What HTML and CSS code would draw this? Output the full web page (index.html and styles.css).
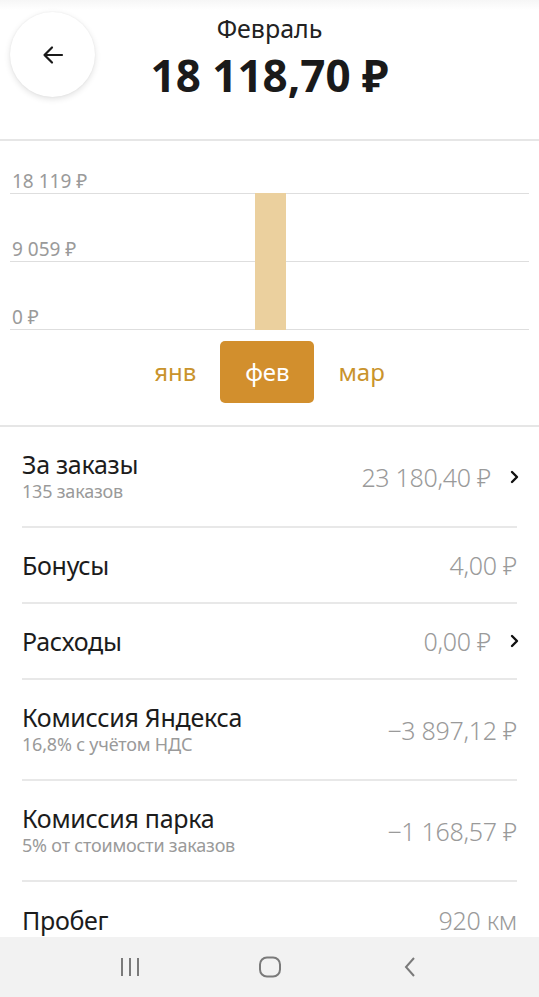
FILE: index.html
```html
<!DOCTYPE html>
<html lang="ru">
<head>
<meta charset="utf-8">
<link rel="stylesheet" href="styles.css">
</head>
<body>
<div class="screen">
  <header class="header">
    <button class="back">
      <svg width="24" height="24" viewBox="0 0 24 24"><path d="M21 12H3.5M11 4.5L3.5 12L11 19.5" fill="none" stroke="#1a1a1a" stroke-width="2.2" stroke-linecap="round" stroke-linejoin="round"/></svg>
    </button>
    <div class="title">
      <div class="month">Февраль</div>
      <div class="total">18 118,70 ₽</div>
    </div>
  </header>

  <section class="chart">
    <div class="plot">
      <div class="grid-row"><span class="axis">18 119 ₽</span></div>
      <div class="grid-row"><span class="axis">9 059 ₽</span></div>
      <div class="grid-row"><span class="axis">0 ₽</span></div>
      <div class="bar"></div>
    </div>
    <div class="months">
      <span class="m">янв</span>
      <span class="m active">фев</span>
      <span class="m">мар</span>
    </div>
  </section>

  <ul class="list">
    <li class="row">
      <div class="label"><div class="name">За заказы</div><div class="sub">135 заказов</div></div>
      <div class="value">23 180,40 ₽</div>
      <svg class="chev" width="12" height="14" viewBox="0 0 12 14"><path d="M3 2l5 5-5 5" fill="none" stroke="#111" stroke-width="2.4" stroke-linecap="round" stroke-linejoin="round"/></svg>
    </li>
    <li class="row">
      <div class="label"><div class="name">Бонусы</div></div>
      <div class="value">4,00 ₽</div>
    </li>
    <li class="row">
      <div class="label"><div class="name">Расходы</div></div>
      <div class="value">0,00 ₽</div>
      <svg class="chev" width="12" height="14" viewBox="0 0 12 14"><path d="M3 2l5 5-5 5" fill="none" stroke="#111" stroke-width="2.4" stroke-linecap="round" stroke-linejoin="round"/></svg>
    </li>
    <li class="row">
      <div class="label"><div class="name">Комиссия Яндекса</div><div class="sub">16,8% с учётом НДС</div></div>
      <div class="value">−3 897,12 ₽</div>
    </li>
    <li class="row">
      <div class="label"><div class="name">Комиссия парка</div><div class="sub">5% от стоимости заказов</div></div>
      <div class="value">−1 168,57 ₽</div>
    </li>
    <li class="row">
      <div class="label"><div class="name">Пробег</div></div>
      <div class="value">920 км</div>
    </li>
  </ul>

  <nav class="navbar">
    <span class="nav-btn"><svg width="22" height="22" viewBox="0 0 22 22"><path d="M3 2v18M11 2v18M19 2v18" stroke="#7a7a7a" stroke-width="2"/></svg></span>
    <span class="nav-btn"><svg width="24" height="22" viewBox="0 0 24 22"><rect x="2" y="1.5" width="20" height="19" rx="7" fill="none" stroke="#7a7a7a" stroke-width="2"/></svg></span>
    <span class="nav-btn"><svg width="14" height="22" viewBox="0 0 14 22"><path d="M11 2L3 11l8 9" fill="none" stroke="#7a7a7a" stroke-width="2"/></svg></span>
  </nav>
</div>
</body>
</html>
```

FILE: styles.css
```css
* { box-sizing: border-box; }
html, body { margin: 0; padding: 0; background: #fff; }
body {
  font-family: "Noto Sans", "Open Sans", sans-serif;
  color: #1c1c1c;
  width: 539px;
  height: 997px;
  overflow: hidden;
}
.screen {
  position: relative;
  height: 997px;
  overflow: hidden;
  display: flex;
  flex-direction: column;
  background: linear-gradient(#f6f6f6, #fff 10px) no-repeat;
}
.header {
  position: relative;
  height: 141px;
  border-bottom: 2px solid #e6e6e6;
  display: flex;
  justify-content: center;
}
.back {
  position: absolute;
  left: 10px;
  top: 12px;
  width: 85px;
  height: 85px;
  border-radius: 50%;
  border: none;
  background: #fff;
  box-shadow: 0 2px 6px rgba(0,0,0,0.12), 0 0 2px rgba(0,0,0,0.06);
  display: flex;
  align-items: center;
  justify-content: center;
  padding: 0;
}
.title {
  text-align: center;
  padding-top: 11px;
}
.month {
  font-size: 25px;
  line-height: 34px;
  color: #222;
}
.total {
  font-size: 44px;
  font-weight: 700;
  line-height: 60px;
  color: #1a1a1a;
}
.chart {
  height: 286px;
  border-bottom: 2px solid #e6e6e6;
  padding: 32px 10px 0 10px;
}
.plot {
  position: relative;
  display: flex;
  flex-direction: column;
}
.grid-row {
  height: 68px;
  border-bottom: 1.5px solid #dedede;
  display: flex;
  align-items: flex-end;
}
.grid-row:first-child { height: 21px; }
.axis {
  font-size: 19px;
  line-height: 24px;
  color: #9a9a9a;
  padding-left: 2px;
}
.bar {
  position: absolute;
  left: 245px;
  top: 20px;
  width: 31px;
  bottom: 0;
  background: #ebd09e;
}
.months {
  display: flex;
  justify-content: center;
  gap: 24px;
  margin-top: 11px;
}
.m {
  font-size: 24px;
  line-height: 62px;
  color: #c9932c;
}
.m.active {
  background: #d28f2d;
  color: #fff;
  border-radius: 5px;
  width: 94px;
  text-align: center;
}
.list {
  list-style: none;
  margin: 0;
  padding: 0 22px;
}
.row {
  display: flex;
  align-items: center;
  padding: 22px 0;
  border-bottom: 2px solid #e8e8e8;
  min-height: 76px;
}
.row:last-child { border-bottom: none; }
.label { flex: 1; }
.name {
  font-size: 25px;
  line-height: 30px;
  color: #1c1c1c;
  letter-spacing: -0.3px;
}
.sub {
  font-size: 18px;
  line-height: 25px;
  color: #9a9a9a;
  letter-spacing: -0.2px;
}
.value {
  font-size: 25px;
  line-height: 30px;
  color: #9a9a9a;
  font-weight: 300;
  letter-spacing: -0.3px;
}
.chev { margin-left: 18px; margin-right: -4px; }
.navbar {
  position: absolute;
  left: 0;
  right: 0;
  bottom: 0;
  height: 60px;
  background: #f2f2f2;
  display: flex;
  align-items: center;
  justify-content: center;
  gap: 100px;
}
.nav-btn {
  width: 40px;
  display: flex;
  justify-content: center;
}
```
